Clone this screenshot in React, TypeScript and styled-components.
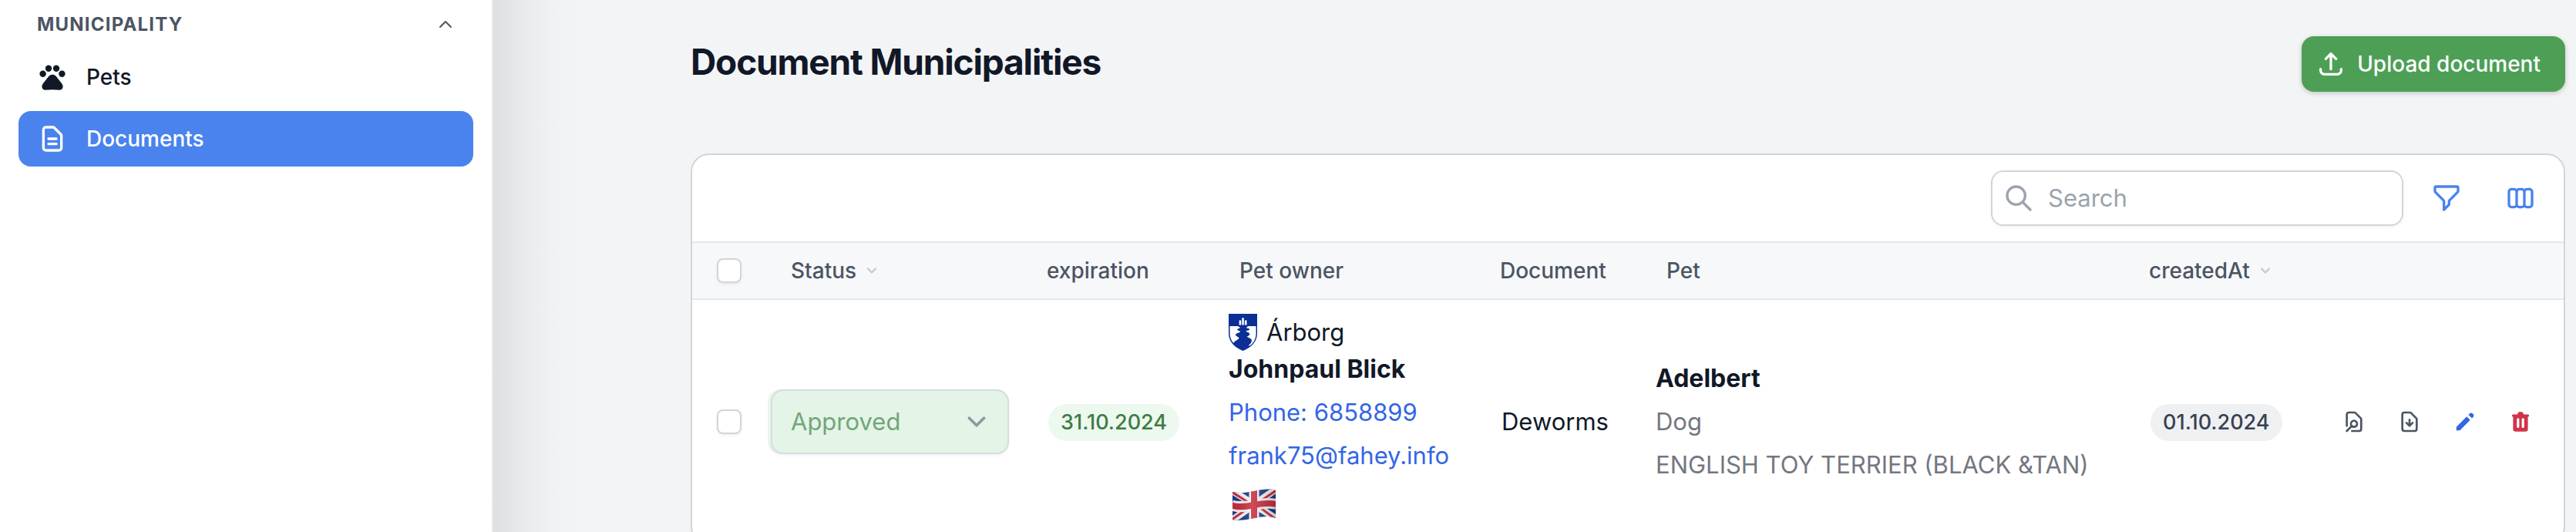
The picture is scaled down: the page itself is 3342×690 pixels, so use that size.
import React from "react";
import styled, { createGlobalStyle, css } from "styled-components";
import {
  HiOutlineDocumentText,
  HiOutlineUpload,
  HiOutlineSearch,
  HiOutlineFilter,
  HiOutlineViewBoards,
  HiOutlineDocumentSearch,
  HiOutlineDocumentDownload,
  HiPencil,
  HiTrash,
  HiOutlineChevronUp,
  HiChevronDown,
} from "react-icons/hi";

const GlobalStyle = createGlobalStyle`
  *, *::before, *::after { box-sizing: border-box; }
  body {
    margin: 0;
    background: #f3f4f6;
    color: #111827;
    font-family: Inter, "Liberation Sans", sans-serif;
    font-size: 31px;
    line-height: 48px;
  }
  button, input, select { font: inherit; color: inherit; }
  svg { display: block; flex: none; }
`;

const Shell = styled.div`
  display: grid;
  grid-template-columns: 640px minmax(0, 1fr);
  height: 100vh;
  overflow: hidden;
`;

const Sidebar = styled.aside`
  background: #fff;
  border-right: 2px solid #e8e9eb;
  padding: 8px 24px 0;
`;

const GroupToggle = styled.button`
  display: flex;
  align-items: center;
  justify-content: space-between;
  width: 100%;
  height: 48px;
  padding: 0 24px;
  border: 0;
  background: none;
  color: #4b5563;
  font-size: 24px;
  font-weight: 700;
  letter-spacing: 0.05em;
  text-transform: uppercase;
`;

const NavList = styled.ul`
  display: flex;
  flex-direction: column;
  gap: 8px;
  margin: 8px 0 0;
  padding: 0;
  list-style: none;
`;

const NavLink = styled.a<{ $active?: boolean }>`
  display: flex;
  align-items: center;
  gap: 24px;
  height: 72px;
  padding: 0 24px;
  border-radius: 16px;
  font-size: 28px;
  font-weight: 500;
  text-decoration: none;
  color: ${(p) => (p.$active ? "#fff" : "#111827")};
  background: ${(p) => (p.$active ? "#4a83ee" : "transparent")};
`;

const Main = styled.main`
  padding: 47px 14px 0 256px;
  background: linear-gradient(
    to right,
    #dddfe1,
    #e5e6e8 25px,
    #ecedef 52px,
    #f0f2f4 80px,
    #f3f4f6 110px
  );
`;

const PageHeader = styled.header`
  display: flex;
  justify-content: space-between;
  align-items: flex-start;
  margin-bottom: 80px;
`;

const Title = styled.h1`
  margin: 0;
  font-size: 46px;
  line-height: 66px;
  font-weight: 700;
  letter-spacing: -0.025em;
`;

const UploadButton = styled.button`
  display: flex;
  align-items: center;
  gap: 14px;
  height: 72px;
  padding: 0 32px 0 18px;
  border: 0;
  border-radius: 16px;
  background: #4d9f56;
  color: #fff;
  font-size: 28px;
  font-weight: 500;
  box-shadow: 0 2px 6px rgba(0, 0, 0, 0.2);
`;

const Card = styled.section`
  background: #fff;
  border: 2px solid #d1d5db;
  border-radius: 24px;
  overflow: hidden;
`;

const Toolbar = styled.div`
  display: flex;
  justify-content: flex-end;
  align-items: center;
  gap: 16px;
  padding: 16px;
`;

const SearchBox = styled.label`
  display: flex;
  align-items: center;
  gap: 18px;
  width: 535px;
  height: 72px;
  padding: 0 14px;
  border: 2px solid #d1d5db;
  border-radius: 16px;
  color: #9ca3af;
  box-shadow: 0 2px 4px rgba(0, 0, 0, 0.05);
`;

const SearchInput = styled.input`
  flex: 1;
  min-width: 0;
  padding: 0;
  border: 0;
  outline: 0;
  background: none;
  color: #111827;
  &::placeholder { color: #9ca3af; opacity: 1; }
`;

const ToolButton = styled.button`
  display: grid;
  place-items: center;
  width: 80px;
  height: 80px;
  padding: 0;
  border: 0;
  background: none;
  color: #4a83ee;
`;

const Table = styled.table`
  width: 100%;
  table-layout: fixed;
  border-collapse: separate;
  border-spacing: 0;
`;

const Col = styled.col<{ $w?: number }>`
  ${(p) => p.$w && css`width: ${p.$w}px;`}
`;

const HeadCell = styled.th`
  height: 76px;
  padding: 0 32px;
  border-top: 2px solid #e5e7eb;
  border-bottom: 2px solid #e5e7eb;
  background: #f7f8fa;
  color: #4b5563;
  font-size: 28px;
  font-weight: 500;
  text-align: left;
  white-space: nowrap;
`;

const SortButton = styled.button`
  display: flex;
  align-items: center;
  gap: 8px;
  padding: 0;
  border: 0;
  background: none;
  svg { color: #c8ccd2; }
`;

const Cell = styled.td<{ $pad?: number }>`
  height: 316px;
  padding: 0 0 0 ${(p) => p.$pad ?? 34}px;
  white-space: nowrap;
`;

const Checkbox = styled.input`
  appearance: none;
  display: block;
  width: 32px;
  height: 32px;
  margin: 0;
  border: 2px solid #d1d5db;
  border-radius: 8px;
  background: #fff;
  box-shadow: 0 2px 4px rgba(0, 0, 0, 0.06);
`;

const SelectWrap = styled.div`
  position: relative;
  width: 313px;
  padding-left: 4px;
  border-radius: 16px;
  background: #ebf7ed;
  color: #9098a1;
  svg {
    position: absolute;
    right: 18px;
    top: 18px;
    pointer-events: none;
  }
`;

const StatusSelect = styled.select`
  appearance: none;
  display: block;
  width: 100%;
  height: 84px;
  padding: 0 64px 0 24px;
  border: 2px solid #d5dde0;
  border-radius: 16px;
  background: #e4f4e6;
  color: #72a67a;
  opacity: 1;
  box-shadow: 0 2px 4px rgba(0, 0, 0, 0.05);
`;

const Badge = styled.span<{ $tone: "green" | "gray" }>`
  display: inline-flex;
  align-items: center;
  height: 48px;
  padding: 0 16px;
  border-radius: 24px;
  font-size: 27px;
  font-weight: 500;
  vertical-align: middle;
  color: ${(p) => (p.$tone === "green" ? "#3b7d43" : "#374151")};
  background: ${(p) => (p.$tone === "green" ? "#edf8ef" : "#eff0f2")};
`;

const Stack = styled.div`
  display: flex;
  flex-direction: column;
  align-items: flex-start;
  gap: 8px;
`;

const OwnerHead = styled.div`
  display: flex;
  flex-direction: column;
`;

const Municipality = styled.div`
  display: flex;
  align-items: center;
  gap: 12px;
`;

const Name = styled.strong`
  font-size: 32px;
  font-weight: 700;
`;

const ContactLink = styled.a`
  color: #3366e6;
  text-decoration: none;
`;

const FlagRow = styled.div`
  display: flex;
  align-items: center;
  height: 64px;
  padding: 0 4px;
`;

const Muted = styled.span`
  color: #747781;
`;

const Actions = styled.div`
  display: flex;
  justify-content: flex-end;
  gap: 40px;
  padding-right: 40px;
`;

const ActionButton = styled.button<{ $color: string }>`
  padding: 0;
  border: 0;
  background: none;
  color: ${(p) => p.$color};
`;

function Paw() {
  return (
    <svg width="40" height="40" viewBox="0 0 40 40" fill="currentColor" aria-hidden="true">
      <circle cx="7.600" cy="15.800" r="4.200" />
      <circle cx="15" cy="8.800" r="4.200" />
      <circle cx="25" cy="8.800" r="4.200" />
      <circle cx="32.400" cy="15.800" r="4.200" />
      <path d="M20 16.800c2.300 0 4 1.300 5.400 3l6.300 8c1.500 1.900 2.400 3.800 1.700 6-.6 2-2.100 2.900-4.200 2.900-3 0-6-.5-9.200-.5s-6.200.5-9.200.5c-2.100 0-3.600-.9-4.200-2.900-.7-2.200.2-4.100 1.700-6l6.300-8c1.400-1.700 3.100-3 5.400-3z" />
    </svg>
  );
}

function SelectChevron() {
  return (
    <svg width="48" height="48" viewBox="0 0 20 20" fill="none" aria-hidden="true">
      <path
        d="M6 8l4 4 4-4"
        stroke="currentColor"
        strokeWidth="1.500"
        strokeLinecap="round"
        strokeLinejoin="round"
      />
    </svg>
  );
}

function ArborgCrest() {
  return (
    <svg width="37" height="48" viewBox="0 0 37 48" role="img" aria-label="Árborg">
      <path d="M0 0h37v25c0 12-8 18.500-18.500 23C8 43.500 0 37 0 25z" fill="#0b2f94" />
      <path d="M1.500 16h10.800c.2 1.200 2.600 1 2.600 1.900 0 1-3.500.8-3.700 2.400-.2 1.700 4 1.800 3.900 3-.2 1.200-5.800 1.500-6 4-.2 2.300 4.200 2.400 4.200 4.200 0 1.700-5.300 3.200-7 6.500C3.300 34.600 1.500 30.500 1.500 25z" fill="#fff" />
      <path d="M24.800 16h10.700v9c0 8-3.500 13.500-8.300 16.500-.9.300-1.500-.5-.6-1.300 2.500-2 3.600-3.800 3.200-6.100-.5-2.600-4.500-3-6.400-4.600 2.400-.8 4.100-1.800 3.800-3.800-.4-1.800-3.900-1.900-4.800-3.300 1.800-.7 4.900-.8 4.700-2.300-.2-1.400-3.800-.8-4.100-2 .2-.9 1.800-.9 1.800-2.100z" fill="#fff" />
      <path d="M13.600 8.500h2.600v6h-2.600zM17.300 5.200h2.500v9.300h-2.500zM20.900 8.500h2.600v6h-2.600z" fill="#fff" />
    </svg>
  );
}

function BritishFlag() {
  return (
    <svg width="58" height="42" viewBox="0 0 58 42" role="img" aria-label="United Kingdom">
      <defs>
        <clipPath id="flag-shape">
          <path d="M1 4c9 2 18 1 28-1S48-1 57 2v36c-9-3-18-2-28 0s-19 4-28 2z" />
        </clipPath>
        <linearGradient id="flag-shade" x1="0" x2="1" y1="0" y2="0">
          <stop offset="0" stopColor="#000" stopOpacity="0.05" />
          <stop offset="0.45" stopColor="#fff" stopOpacity="0.14" />
          <stop offset="1" stopColor="#000" stopOpacity="0.18" />
        </linearGradient>
      </defs>
      <g clipPath="url(#flag-shape)">
        <path d="M0 0h58v42H0z" fill="#173a86" />
        <path d="M0 2l58 37M0 41L58 0" stroke="#f3f3f5" strokeWidth="9" />
        <path d="M0 4l27 17M31 20l27 20M0 40l27-19M31 20L58 2" stroke="#cb2b3b" strokeWidth="3" />
        <path d="M0 21.500c10 3 19 1.500 29-.5s19-3.500 29-1" stroke="#f3f3f5" strokeWidth="14" fill="none" />
        <path d="M29 0v42" stroke="#f3f3f5" strokeWidth="13" />
        <path d="M0 21.500c10 3 19 1.500 29-.5s19-3.500 29-1" stroke="#c72c3b" strokeWidth="8" fill="none" />
        <path d="M29 0v42" stroke="#c72c3b" strokeWidth="8" />
        <path d="M0 0h58v42H0z" fill="url(#flag-shade)" />
      </g>
    </svg>
  );
}

export default function App() {
  return (
    <>
      <GlobalStyle />
      <Shell>
        <Sidebar>
          <nav aria-label="Municipality">
            <GroupToggle aria-expanded="true">
              Municipality
              <HiOutlineChevronUp size={24} />
            </GroupToggle>
            <NavList>
              <li>
                <NavLink href="#pets">
                  <Paw />
                  Pets
                </NavLink>
              </li>
              <li>
                <NavLink href="#documents" $active aria-current="page">
                  <HiOutlineDocumentText size={40} />
                  Documents
                </NavLink>
              </li>
            </NavList>
          </nav>
        </Sidebar>
        <Main>
          <PageHeader>
            <Title>Document Municipalities</Title>
            <UploadButton>
              <HiOutlineUpload size={40} />
              Upload document
            </UploadButton>
          </PageHeader>
          <Card>
            <Toolbar>
              <SearchBox>
                <HiOutlineSearch size={40} />
                <SearchInput type="search" placeholder="Search" aria-label="Search" />
              </SearchBox>
              <ToolButton aria-label="Filter">
                <HiOutlineFilter size={40} />
              </ToolButton>
              <ToolButton aria-label="Toggle columns">
                <HiOutlineViewBoards size={40} />
              </ToolButton>
            </Toolbar>
            <Table>
              <colgroup>
                <Col $w={96} />
                <Col $w={332} />
                <Col $w={250} />
                <Col $w={338} />
                <Col $w={216} />
                <Col />
                <Col $w={250} />
                <Col $w={320} />
              </colgroup>
              <thead>
                <tr>
                  <HeadCell>
                    <Checkbox type="checkbox" aria-label="Select all" />
                  </HeadCell>
                  <HeadCell>
                    <SortButton>
                      Status <HiChevronDown size={24} />
                    </SortButton>
                  </HeadCell>
                  <HeadCell>expiration</HeadCell>
                  <HeadCell>Pet owner</HeadCell>
                  <HeadCell>Document</HeadCell>
                  <HeadCell>Pet</HeadCell>
                  <HeadCell>
                    <SortButton>
                      createdAt <HiChevronDown size={24} />
                    </SortButton>
                  </HeadCell>
                  <HeadCell aria-label="Actions" />
                </tr>
              </thead>
              <tbody>
                <tr>
                  <Cell $pad={32}>
                    <Checkbox type="checkbox" aria-label="Select Adelbert" />
                  </Cell>
                  <Cell $pad={2}>
                    <SelectWrap>
                      <StatusSelect aria-label="Status" disabled defaultValue="approved">
                        <option value="approved">Approved</option>
                      </StatusSelect>
                      <SelectChevron />
                    </SelectWrap>
                  </Cell>
                  <Cell>
                    <Badge $tone="green">31.10.2024</Badge>
                  </Cell>
                  <Cell $pad={18}>
                    <Stack>
                      <OwnerHead>
                        <Municipality>
                          <ArborgCrest />
                          Árborg
                        </Municipality>
                        <Name>Johnpaul Blick</Name>
                      </OwnerHead>
                      <ContactLink href="tel:6858899">Phone: 6858899</ContactLink>
                      <ContactLink href="mailto:frank75@fahey.info">frank75@fahey.info</ContactLink>
                      <FlagRow>
                        <BritishFlag />
                      </FlagRow>
                    </Stack>
                  </Cell>
                  <Cell>Deworms</Cell>
                  <Cell $pad={18}>
                    <Stack>
                      <Name>Adelbert</Name>
                      <Muted>Dog</Muted>
                      <Muted>ENGLISH TOY TERRIER (BLACK &amp;TAN)</Muted>
                    </Stack>
                  </Cell>
                  <Cell>
                    <Badge $tone="gray">01.10.2024</Badge>
                  </Cell>
                  <Cell>
                    <Actions>
                      <ActionButton $color="#4b5563" aria-label="View document">
                        <HiOutlineDocumentSearch size={32} />
                      </ActionButton>
                      <ActionButton $color="#4b5563" aria-label="Download document">
                        <HiOutlineDocumentDownload size={32} />
                      </ActionButton>
                      <ActionButton $color="#3366e6" aria-label="Edit">
                        <HiPencil size={32} />
                      </ActionButton>
                      <ActionButton $color="#d03449" aria-label="Delete">
                        <HiTrash size={32} />
                      </ActionButton>
                    </Actions>
                  </Cell>
                </tr>
              </tbody>
            </Table>
          </Card>
        </Main>
      </Shell>
    </>
  );
}
